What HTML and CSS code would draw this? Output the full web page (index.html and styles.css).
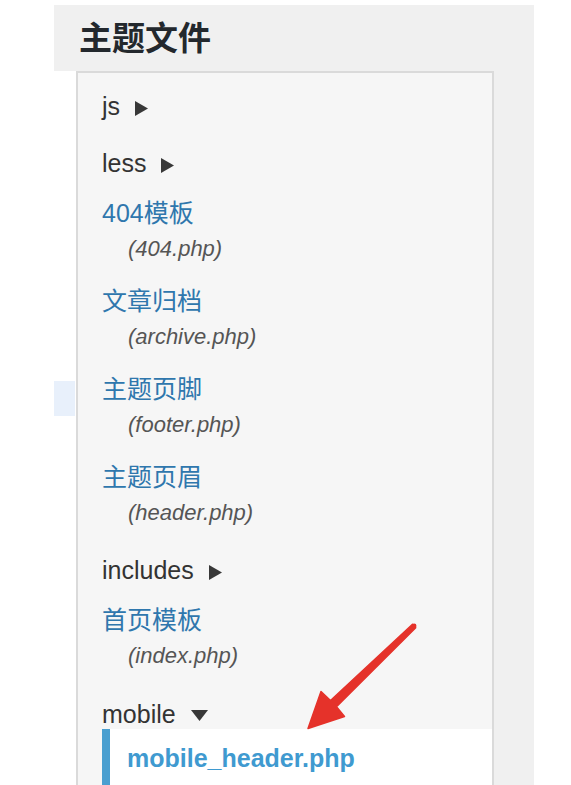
FILE: index.html
```html
<!DOCTYPE html>
<html lang="zh">
<head>
<meta charset="utf-8">
<link rel="stylesheet" href="styles.css">
</head>
<body>
<div class="panel">
  <h2 class="panel-title">主题文件</h2>
  <div class="panel-body">
    <div class="gutter"><div class="gutter-mark"></div></div>
    <div class="tree-box">
      <ul class="tree">
        <li class="folder">js<svg class="caret" width="13" height="15" viewBox="0 0 13 15"><path d="M0 0 L13 7.5 L0 15 Z"/></svg></li>
        <li class="folder">less<svg class="caret" width="13" height="15" viewBox="0 0 13 15"><path d="M0 0 L13 7.5 L0 15 Z"/></svg></li>
        <li class="file"><a class="file-link">404模板</a><span class="file-name">(404.php)</span></li>
        <li class="file"><a class="file-link">文章归档</a><span class="file-name">(archive.php)</span></li>
        <li class="file"><a class="file-link">主题页脚</a><span class="file-name">(footer.php)</span></li>
        <li class="file"><a class="file-link">主题页眉</a><span class="file-name">(header.php)</span></li>
        <li class="folder">includes<svg class="caret" width="13" height="15" viewBox="0 0 13 15"><path d="M0 0 L13 7.5 L0 15 Z"/></svg></li>
        <li class="file"><a class="file-link">首页模板</a><span class="file-name">(index.php)</span></li>
        <li class="folder open"><span class="folder-label">mobile<svg class="caret-down" width="17" height="11" viewBox="0 0 17 11"><path d="M0 0 L17 0 L8.5 11 Z"/></svg></span>
          <ul class="sub">
            <li class="current"><a class="current-link">mobile_header.php</a></li>
          </ul>
        </li>
      </ul>
    </div>
    <div class="right-rail"></div>
  </div>
</div>
<svg class="annot-arrow" width="571" height="785" viewBox="0 0 571 785">
  <path d="M412.5 624.3 L330.5 700.5 L321 691.5 L308 728.5 L344.5 716.5 L336.5 706.8 L415.7 627.7 Z" fill="#e5322a" stroke="#e5322a" stroke-width="1.5" stroke-linejoin="round"/>
  <circle cx="414.1" cy="626" r="2.4" fill="#e5322a"/>
</svg>
</body>
</html>
```
FILE: styles.css
```css
html, body {
  margin: 0;
  padding: 0;
  background: #ffffff;
  overflow: hidden;
}
body {
  width: 571px;
  height: 785px;
  position: relative;
  font-family: "Liberation Sans", Arial, "Noto Sans CJK SC", sans-serif;
  color: #333333;
}
.panel {
  margin: 5px 0 0 54px;
  width: 480px;
  height: 780px;
  display: flex;
  flex-direction: column;
  background: #f0f0f0;
}
.panel-title {
  margin: 0;
  padding-left: 25px;
  height: 66px;
  line-height: 68px;
  font-size: 33px;
  font-weight: bold;
  color: #23282d;
  font-family: "Liberation Sans", "Noto Sans CJK SC", sans-serif;
}
.panel-body {
  flex: 1;
  display: flex;
  min-height: 0;
}
.gutter {
  width: 22px;
  background: #ffffff;
  padding-top: 310px;
}
.gutter-mark {
  width: 21px;
  height: 35px;
  background: #e8f0fb;
}
.tree-box {
  width: 414px;
  border: 2px solid #dadada;
  border-bottom: none;
  background: #f6f6f6;
  overflow: hidden;
}
.right-rail {
  flex: 1;
}
.tree {
  list-style: none;
  margin: 0;
  padding: 15px 0 0 24px;
}
.tree li {
  font-size: 25px;
  line-height: 36px;
}
.folder {
  margin-top: 21px;
  color: #333333;
}
.tree > .folder:first-child {
  margin-top: 0;
}
.folder.open {
  margin-top: 22px;
}
.folder + .file {
  margin-top: 14px;
}
.file {
  margin-top: 16px;
  display: flex;
  flex-direction: column;
}
.caret {
  margin-left: 15px;
  fill: #383838;
  vertical-align: -1px;
}
.caret-down {
  margin-left: 15px;
  fill: #383838;
  vertical-align: 2px;
}
.folder-label {
  display: block;
  height: 33px;
}
.file-link {
  color: #2f77ad;
  font-family: "Liberation Sans", "Noto Sans CJK SC", sans-serif;
}
.file-name {
  padding-left: 26px;
  font-size: 22px;
  font-style: italic;
  color: #555555;
}
.sub {
  list-style: none;
  margin: 0;
  padding: 0;
}
.current {
  background: #ffffff;
  border-left: 8px solid #4a9fd0;
  padding: 11px 0 20px 17px;
}
.current-link {
  font-weight: bold;
  color: #3f9ad0;
}
.annot-arrow {
  position: absolute;
  left: 0;
  top: 0;
  pointer-events: none;
}
```
